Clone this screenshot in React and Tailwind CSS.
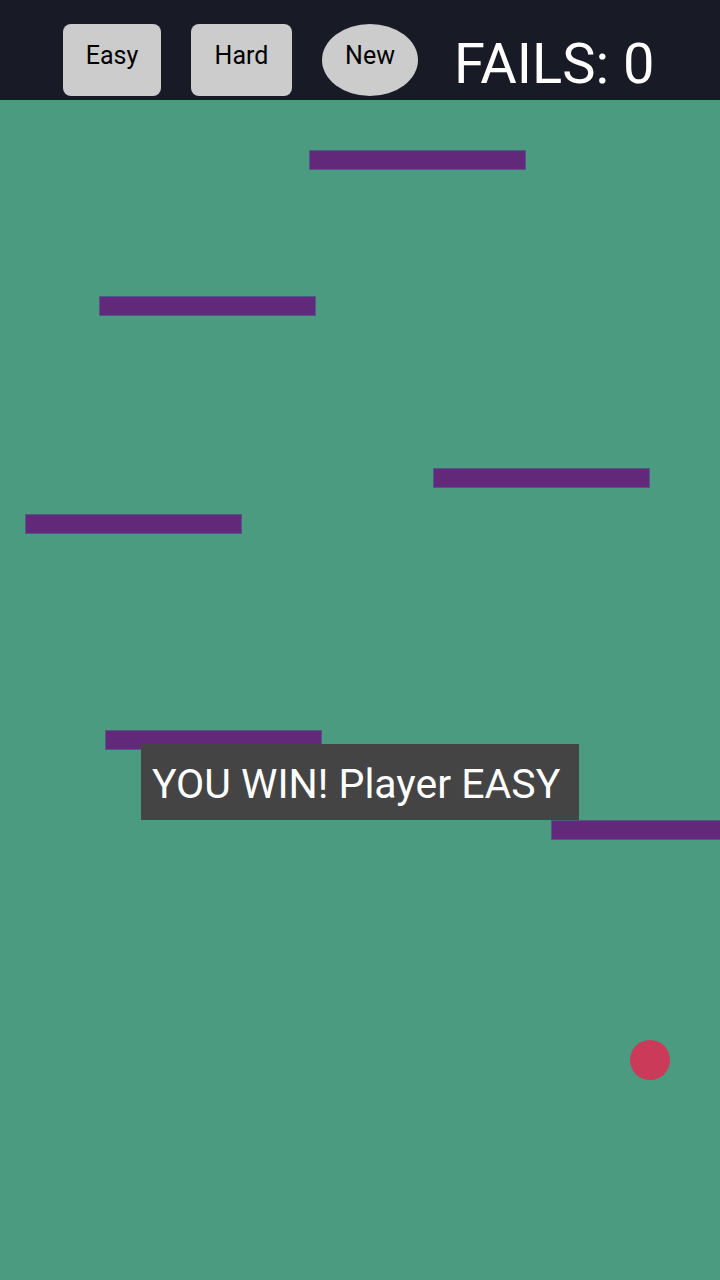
import React from "react";

// platform positions on the board (board starts at y=100)
const bars = [
  { x: 309, y: 50 },
  { x: 99, y: 196 },
  { x: 433, y: 368 },
  { x: 25, y: 414 },
  { x: 105, y: 630 },
  { x: 551, y: 720 },
];

const App = () => {
  return (
    <div
      className="w-[720px] h-[1280px] flex flex-col overflow-hidden"
      style={{ fontFamily: "Roboto, 'Liberation Sans', sans-serif" }}
    >
      {/* Top bar */}
      <div className="h-[100px] bg-[#181a26] flex items-start pt-[24px] pl-[63px]">
        <button className="w-[98px] h-[72px] pb-[8px] rounded-lg bg-[#cccccc] text-black text-[25px]">
          Easy
        </button>
        <button className="ml-[30px] w-[101px] h-[72px] pb-[8px] rounded-lg bg-[#cccccc] text-black text-[25px]">
          Hard
        </button>
        <button className="ml-[30px] w-[96px] h-[72px] pb-[8px] rounded-[50%] bg-[#cccccc] text-black text-[25px]">
          New
        </button>
        <div className="ml-[36px] h-[80px] flex items-center text-white text-[56px] leading-none">
          FAILS: 0
        </div>
      </div>

      {/* Board */}
      <div className="relative flex-1 bg-[#4a9b7f]">
        {bars.map((b, i) => (
          <div
            key={i}
            className="absolute w-[217px] h-[20px] bg-[#62287a] border border-[#52588a]"
            style={{ left: b.x, top: b.y }}
          />
        ))}

        <div className="absolute left-[141px] top-[644px] w-[438px] h-[76px] bg-[#444444] flex items-center pl-[11px] pt-[4px]">
          <span className="text-white text-[41px] leading-none">YOU WIN! Player EASY</span>
        </div>

        <div className="absolute left-[630px] top-[940px] w-[40px] h-[40px] rounded-full bg-[#cc3a5a]" />
      </div>
    </div>
  );
};

export default App;
